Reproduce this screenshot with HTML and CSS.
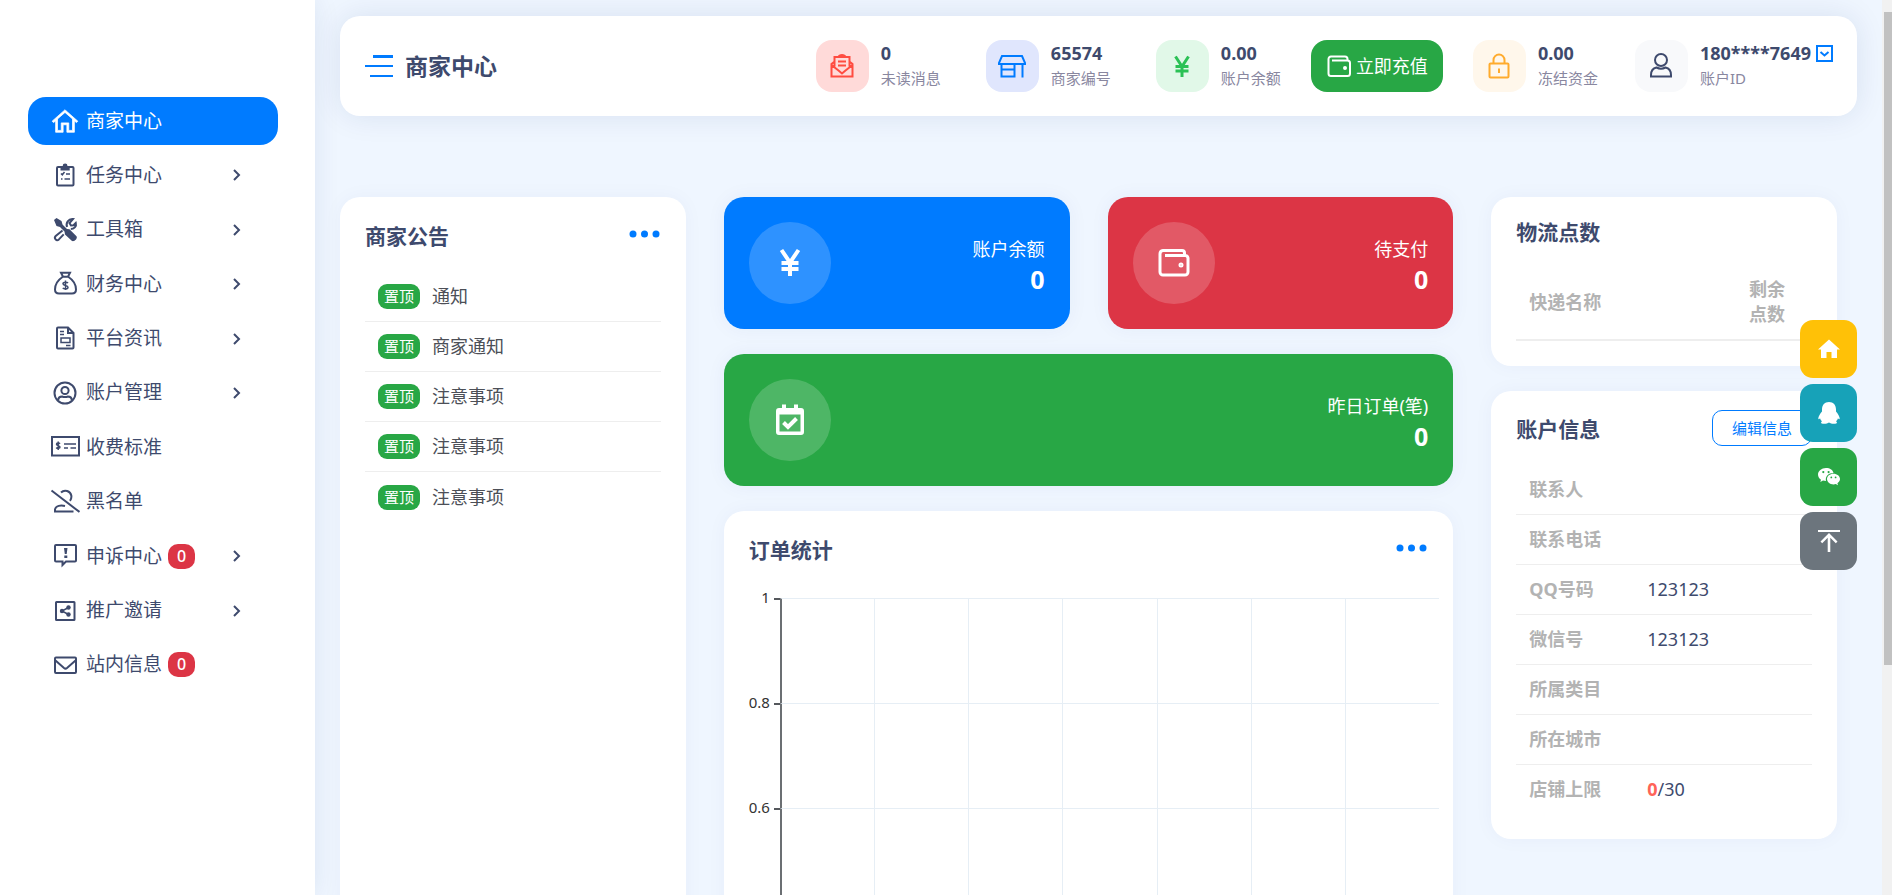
FILE: index.html
```html
<!DOCTYPE html>
<html lang="zh-CN">
<head>
<meta charset="utf-8">
<title>商家中心</title>
<link rel="stylesheet" href="styles.css">
</head>
<body>
<div class="app">
  <nav class="sidebar" aria-label="主导航">
    <ul class="menu">
      <li><a class="menu-link active" href="#">
        <svg class="menu-icon" viewBox="0 0 32 32"><path fill="currentColor" d="M16 4l-.719.687-13 11.500L3.720 17.720 6 15.900V28h8v-8h4v8h8V15.900l2.281 1.820 1.438-1.438-13-11.500zm0 2.844l8 7V26h-4v-8h-8v8H8V13.844z" stroke="currentColor" stroke-width=".8"/></svg>
        <span>商家中心</span></a></li>
      <li><a class="menu-link" href="#">
        <svg class="menu-icon line" viewBox="0 0 30 30"><rect x="7" y="7" width="16.5" height="18.5" rx="1"/><path class="solid" d="M10.5 6h2.200a2.400 2.400 0 0 1 4.800 0h2.200v4.500h-9.200z"/><path class="thin" d="M11 13.500l1.300 1.300 2.200-2.800M16 14h4M11 19h1.500M14.500 19H20"/></svg>
        <span>任务中心</span><svg class="chevron" viewBox="0 0 12 16"><path d="M3 3l5 5-5 5"/></svg></a></li>
      <li><a class="menu-link" href="#">
        <svg class="menu-icon line" viewBox="0 0 30 30"><path class="solid" d="M4 5L6.500 3l5 3 1 3.500 4.500 4.500 2.500.2 7 7c1.500 2-2 5.800-4.500 4.800L15 19.500l-.5-3-4.500-4.500-3.500-1z"/><path d="M17 12c-1.500-4 1.500-8.500 6-8l-3.500 4 1.500 2.500 2.500-.2 2.300-2.300c1 3.500-2 6-5 6M12.500 15.500L5.700 21c-2.200 2.400.8 5.600 3.200 3.400l4.800-5"/></svg>
        <span>工具箱</span><svg class="chevron" viewBox="0 0 12 16"><path d="M3 3l5 5-5 5"/></svg></a></li>
      <li><a class="menu-link" href="#">
        <svg class="menu-icon line" viewBox="0 0 30 30"><path d="M11 3.700h9l-2 4h-5zM12.500 8C8 11 5 16 5 20.500 5 23.500 7 24.500 9 24.500h13c2 0 4-1 4-4C26 16 23 11 18.500 8"/><path class="thin" d="M18 14c-.8-1-5-1.300-5 .8 0 2.200 5 1.200 5 3.500 0 2.200-4.300 2-5.200.6M15.500 11.500v9.500"/></svg>
        <span>财务中心</span><svg class="chevron" viewBox="0 0 12 16"><path d="M3 3l5 5-5 5"/></svg></a></li>
      <li><a class="menu-link" href="#">
        <svg class="menu-icon line" viewBox="0 0 30 30"><path d="M7 4.500A1 1 0 0 1 8 3.500h10l5.500 5.500v14.500a1 1 0 0 1-1 1H8a1 1 0 0 1-1-1zM18 3.500v5.500h5.500"/><path class="thin" d="M10 7.500h4M10 10.500h4M11 14h9v4.500h-9zM16 21.500h4.500"/></svg>
        <span>平台资讯</span><svg class="chevron" viewBox="0 0 12 16"><path d="M3 3l5 5-5 5"/></svg></a></li>
      <li><a class="menu-link" href="#">
        <svg class="menu-icon line" viewBox="0 0 30 30"><circle cx="15" cy="15" r="10.500"/><circle cx="15" cy="12.500" r="3.600"/><path d="M8 22c.5-3 2.500-3.500 4-3.500 2 .8 4 .8 6 0 1.500 0 3.500.5 4 3.500"/></svg>
        <span>账户管理</span><svg class="chevron" viewBox="0 0 12 16"><path d="M3 3l5 5-5 5"/></svg></a></li>
      <li><a class="menu-link" href="#">
        <svg class="menu-icon line" viewBox="0 0 30 30"><rect x="2" y="5" width="27" height="18.500"/><path class="thin" d="M10 11.800c-.8-1-3.500-1-3.500.5s3.500 1.200 3.500 2.800-3 1.600-3.700.4M8.200 9.500v8.500M14 12h12M14 16h4M20.500 16H26"/></svg>
        <span>收费标准</span></a></li>
      <li><a class="menu-link" href="#">
        <svg class="menu-icon line" viewBox="0 0 30 30"><path d="M1.500 3.500L29.500 25M11 5.500c3.500-3.500 9.500-1.500 10.300 3 .4 2.500-.3 4-1.300 5.300M15 19c-4-1-9.500-.5-10 3.500V24.500h18.500"/></svg>
        <span>黑名单</span></a></li>
      <li><a class="menu-link" href="#">
        <svg class="menu-icon line" viewBox="0 0 30 30"><path d="M6 4h19a1 1 0 0 1 1 1v14.500a1 1 0 0 1-1 1h-9L12.500 24v-3.500H6a1 1 0 0 1-1-1V5a1 1 0 0 1 1-1z"/><path class="solid" d="M14 7h3.500l-.8 6h-1.900zM14.300 14.500h3v2.500h-3z"/></svg>
        <span>申诉中心</span><span class="count">0</span><svg class="chevron" viewBox="0 0 12 16"><path d="M3 3l5 5-5 5"/></svg></a></li>
      <li><a class="menu-link" href="#">
        <svg class="menu-icon line" viewBox="0 0 30 30"><rect x="6" y="6" width="18.500" height="18" rx=".5"/><path class="thin" d="M18.500 11.500L12 15l6.500 3.500"/><circle class="solid" cx="18.500" cy="11.500" r="2.200"/><circle class="solid" cx="12" cy="15" r="2.200"/><circle class="solid" cx="18.500" cy="18.500" r="2.200"/></svg>
        <span>推广邀请</span><svg class="chevron" viewBox="0 0 12 16"><path d="M3 3l5 5-5 5"/></svg></a></li>
      <li><a class="menu-link" href="#">
        <svg class="menu-icon line" viewBox="0 0 30 30"><rect x="5" y="7.500" width="21" height="15.500" rx="1"/><path d="M5.500 10.500l8.500 7.500c1 .8 2 .8 3 0l8.500-7.500"/></svg>
        <span>站内信息</span><span class="count">0</span></a></li>
    </ul>
  </nav>

  <main class="main">
    <header class="topbar">
      <button class="toggle" type="button" aria-label="折叠菜单">
        <svg viewBox="0 0 28 22"><path fill="currentColor" d="M8 0h20v3H8zM0 10h28v2H0zM5 20h23v2H5z"/></svg>
      </button>
      <h1 class="page-title">商家中心</h1>
      <div class="stats">
        <div class="stat wide">
          <span class="stat-icon red"><svg viewBox="0 0 28 28"><path d="M6 10L3.500 12v12.500h21V12L22 10M3.500 13l7 5.500 3.500 3 3.500-3 7-5.500M6.500 14.500V5h15v9.500M10.500 5c1-2.800 6-2.800 7 0M10 9.500h8M10 13.500h8"/></svg></span>
          <span class="stat-text"><b>0</b><small>未读消息</small></span>
        </div>
        <div class="stat wide">
          <span class="stat-icon blue"><svg viewBox="0 0 28 28"><path d="M4 4h20l3.500 8H.5zM3.500 12v12.500h13V12M3.500 17.500h13M24.500 12v13.500"/></svg></span>
          <span class="stat-text"><b>65574</b><small>商家编号</small></span>
        </div>
        <div class="stat">
          <span class="stat-icon green"><svg class="heavy" viewBox="0 0 28 28"><path d="M7.500 4.500L14 14.500l6.500-10M7.500 14.500h13M7.500 19h13M14 14.500V25"/></svg></span>
          <span class="stat-text"><b>0.00</b><small>账户余额</small></span>
        </div>
        <button class="recharge" type="button">
          <svg viewBox="0 0 24 24"><path d="M20.500 6.500V5a2.500 2.500 0 0 0-2.500-2.500H4A2.500 2.500 0 0 0 1.500 5v14.500A2.500 2.500 0 0 0 4 22h16.500a2.500 2.500 0 0 0 2.500-2.500V9a2.500 2.500 0 0 0-2.500-2.500H5"/><circle cx="18" cy="14" r="1" /></svg>
          立即充值</button>
        <div class="stat near">
          <span class="stat-icon amber"><svg viewBox="0 0 28 28"><rect x="4.500" y="11.500" width="19" height="14" rx="1"/><path d="M8.500 11.500V8a5.500 5.500 0 0 1 11 0v3.500M14 16.500v4.500"/></svg></span>
          <span class="stat-text"><b>0.00</b><small>冻结资金</small></span>
        </div>
        <div class="stat">
          <span class="stat-icon pale"><svg viewBox="0 0 28 28"><circle cx="14" cy="8" r="6"/><path d="M9.500 15.500c3 1.600 6 1.600 9 0 3.500.8 5.500 3.500 5.500 7.500v1.500H4V23c0-4 2-6.700 5.500-7.500z"/></svg></span>
          <span class="stat-text"><b>180****7649 <svg class="caret" viewBox="0 0 17 17"><path d="M1 1h15v15H1zM4.500 7l4 3.500 4-3.500"/></svg></b><small>账户ID</small></span>
        </div>
      </div>
    </header>

    <div class="grid">
      <section class="card notices">
        <div class="card-head">
          <h2>商家公告</h2>
          <button class="more" type="button" aria-label="更多"><svg viewBox="0 0 32 8"><circle cx="4" cy="4" r="3.500"/><circle cx="15.500" cy="4" r="3.500"/><circle cx="27" cy="4" r="3.500"/></svg></button>
        </div>
        <ul class="notice-list">
          <li><span class="tag">置顶</span><a href="#">通知</a></li>
          <li><span class="tag">置顶</span><a href="#">商家通知</a></li>
          <li><span class="tag">置顶</span><a href="#">注意事项</a></li>
          <li><span class="tag">置顶</span><a href="#">注意事项</a></li>
          <li><span class="tag">置顶</span><a href="#">注意事项</a></li>
        </ul>
      </section>

      <div class="center">
        <section class="tile tile-blue">
          <span class="disc"><svg class="heavy" viewBox="0 0 32 32"><path d="M7.500 3L16 15.500 24.500 3M7.500 16h17M7.500 22h17M16 15v14"/></svg></span>
          <span class="tile-text"><span>账户余额</span><b>0</b></span>
        </section>
        <section class="tile tile-red">
          <span class="disc"><svg viewBox="0 0 32 32"><path d="M26.500 8V6A2.500 2.500 0 0 0 24 3.500H5A3.500 3.500 0 0 0 2 7v18a3 3 0 0 0 3 3h22a3 3 0 0 0 3-3V11a3 3 0 0 0-3-2.500H7"/><circle cx="23" cy="18" r="1"/></svg></span>
          <span class="tile-text"><span>待支付</span><b>0</b></span>
        </section>
        <section class="tile tile-green">
          <span class="disc"><svg class="heavy" viewBox="0 0 32 32"><path fill="currentColor" stroke="none" fill-rule="evenodd" d="M8 .5h4V4h8V.5h4V4h3q3 0 3 3v21q0 3-3 3H5q-3 0-3-3V7q0-3 3-3h3zM5.500 10.500v17h21v-17z"/><path d="M9.500 18.500l4.500 4.500 8.500-8.500"/></svg></span>
          <span class="tile-text"><span>昨日订单(笔)</span><b>0</b></span>
        </section>
        <section class="card chart-card">
          <div class="card-head">
            <h2>订单统计</h2>
            <button class="more" type="button" aria-label="更多"><svg viewBox="0 0 32 8"><circle cx="4" cy="4" r="3.500"/><circle cx="15.500" cy="4" r="3.500"/><circle cx="27" cy="4" r="3.500"/></svg></button>
          </div>
          <div class="chart">
            <div class="band"><span class="tick">1</span><i></i><i></i><i></i><i></i><i></i><i></i><i></i></div>
            <div class="band"><span class="tick">0.8</span><i></i><i></i><i></i><i></i><i></i><i></i><i></i></div>
            <div class="band"><span class="tick">0.6</span><i></i><i></i><i></i><i></i><i></i><i></i><i></i></div>
          </div>
        </section>
      </div>

      <div class="side">
        <section class="card">
          <h2>物流点数</h2>
          <table class="points">
            <thead><tr><th scope="col">快递名称</th><th class="remain" scope="col">剩余点数</th></tr></thead>
          </table>
        </section>
        <section class="card">
          <div class="card-head account-head">
            <h2>账户信息</h2>
            <button class="edit" type="button">编辑信息</button>
          </div>
          <table class="info">
            <tbody>
              <tr><th scope="row">联系人</th><td></td></tr>
              <tr><th scope="row">联系电话</th><td></td></tr>
              <tr><th scope="row">QQ号码</th><td>123123</td></tr>
              <tr><th scope="row">微信号</th><td>123123</td></tr>
              <tr><th scope="row">所属类目</th><td></td></tr>
              <tr><th scope="row">所在城市</th><td></td></tr>
              <tr><th scope="row">店铺上限</th><td><b>0</b>/30</td></tr>
            </tbody>
          </table>
        </section>
      </div>
    </div>
  </main>

  <div class="dock">
    <a class="dock-home" href="#" aria-label="首页"><svg viewBox="0 0 22 22"><path d="M11 1.500L0 11.500h3V20h5.500v-6h5v6H19v-8.500h3z"/></svg></a>
    <a class="dock-qq" href="#" aria-label="QQ"><svg viewBox="0 0 22 22"><path d="M11 0C6.500 0 4 3 4 7.500v2C2 12 .3 14.500.3 16.500c0 1 .8 1.200 1.700-.3.3 1.300 1 2.300 2 3.100-1.500.7-1.300 2.400 1 2.500 2.500.2 4.500-.2 6-1.300 1.500 1.100 3.500 1.500 6 1.300 2.300-.1 2.500-1.800 1-2.500 1-.8 1.700-1.800 2-3.100.9 1.500 1.700 1.300 1.700.3 0-2-1.700-4.500-3.700-7v-2C18 3 15.500 0 11 0z"/></svg></a>
    <a class="dock-wechat" href="#" aria-label="微信"><svg viewBox="0 0 22 22"><path fill-rule="evenodd" d="M8 2C3.500 2 0 5 0 8.500c0 2.200 1.200 4 3 5.200L2.300 16l2.700-1.400c1 .3 2 .4 3 .4-1-4.500 2.500-8 7.500-8C15 4 12 2 8 2zM5.300 5a1.100 1.100 0 1 1 0 2.200 1.100 1.100 0 0 1 0-2.200zm5.300 0a1.100 1.100 0 1 1 0 2.200 1.100 1.100 0 0 1 0-2.200zM15.500 7.800c-3.700 0-6.500 2.400-6.500 5.300s2.800 5.300 6.500 5.300c.8 0 1.600-.1 2.300-.4l2.200 1.200-.6-2C21 16.200 22 14.700 22 13.100c0-2.900-2.900-5.300-6.500-5.300zm-2.200 2.700a.9.9 0 1 1 0 1.800.9.900 0 0 1 0-1.800zm4.300 0a.9.900 0 1 1 0 1.800.9.900 0 0 1 0-1.800z"/></svg></a>
    <a class="dock-top" href="#" aria-label="回到顶部"><svg viewBox="0 0 22 22"><path d="M0 0h22v2H0zM11 3l8.500 8.500-1.700 1.700L12.300 7.700V22H9.700V7.700L4.200 13.200l-1.700-1.700z"/></svg></a>
  </div>

  <div class="scroll-rail" aria-hidden="true"><div class="scroll-thumb"></div></div>
</div>
</body>
</html>
```

FILE: styles.css
```css
* { box-sizing: border-box; }

body {
  margin: 0;
  background: #eff6ff;
  color: #3e4a6d;
  font-family: "Noto Sans", "Noto Sans CJK SC", sans-serif;
  font-size: 18px;
  font-weight: 400;
  line-height: 25px;
}

h1, h2, ul { margin: 0; padding: 0; }
ul { list-style: none; }
a { color: inherit; text-decoration: none; }
button { font: inherit; cursor: pointer; }
svg { display: block; flex: none; }

.app {
  display: flex;
  height: 100vh;
  overflow: hidden;
}

/* sidebar */
.sidebar {
  flex: none;
  width: 315px;
  padding: 97px 37px 0 28px;
  background: #fff;
  box-shadow: 0 0 25px rgba(8, 40, 110, .09);
}

.menu {
  display: flex;
  flex-direction: column;
  justify-content: space-between;
  height: 592px;
}

.menu-link {
  display: flex;
  align-items: center;
  height: 48px;
  padding: 0 35px 0 22px;
  border-radius: 18px;
  font-size: 19px;
}

.menu-link.active { background: #007bff; color: #fff; }
.menu-icon { width: 30px; height: 30px; margin-right: 6px; }

.line, .stat-icon svg, .recharge svg, .disc svg, .chevron, .caret {
  fill: none;
  stroke: currentColor;
  stroke-width: 2;
}

.line .solid { fill: currentColor; stroke: none; }
.line .thin { stroke-width: 1.5; }
.chevron { width: 12px; height: 16px; margin-left: auto; }

.count {
  margin-left: 6px;
  padding: 0 9px;
  border-radius: 10px;
  background: #dc3545;
  color: #fff;
  font-size: 16px;
  font-weight: 500;
}

/* header */
.main { flex: 1; min-width: 0; padding: 16px 25px 0; }

.topbar {
  display: flex;
  align-items: center;
  height: 100px;
  padding: 0 24px 0 25px;
  border-radius: 20px;
  background: #fff;
  box-shadow: 0 0 30px rgba(8, 40, 110, .1);
}

.toggle { padding: 0; border: 0; background: none; color: #007bff; }
.toggle svg { width: 28px; height: 22px; }
.page-title { margin-left: 12px; font-size: 23px; font-weight: 700; }

.stats { display: flex; gap: 30px; margin-left: auto; }
.stat { display: flex; gap: 12px; }
.wide { margin-right: 15px; }
.near { margin-right: 7px; }

.stat-icon {
  display: grid;
  place-items: center;
  width: 53px;
  height: 52px;
  border-radius: 16px;
}

.stat-icon svg { width: 28px; height: 28px; }
.stat-icon .heavy { stroke-width: 3; }
.red { background: #ffdad9; color: #ff4c41; }
.blue { background: #e0e6fd; color: #007bff; }
.green { background: #e1f8e8; color: #2bc155; }
.amber { background: #fff7eb; color: #ffab2d; }
.pale { background: #f8f9fb; }

.stat-text { display: flex; flex-direction: column; padding-top: 1px; }
.stat-text b { display: flex; align-items: center; gap: 5px; font-size: 18px; font-weight: 700; white-space: nowrap; }
.stat-text small { color: #89879f; font-size: 15px; line-height: 24px; }
.caret { width: 17px; height: 17px; color: #007bff; }

.recharge {
  display: flex;
  align-items: center;
  gap: 5px;
  height: 52px;
  padding: 0 15px 0 16px;
  border: 0;
  border-radius: 16px;
  background: #28a745;
  color: #fff;
}

.recharge svg { width: 24px; height: 24px; }

/* dashboard */
.grid {
  display: grid;
  grid-template-columns: repeat(4, 1fr);
  gap: 38px;
  padding: 81px 20px 0 0;
}

.main { margin-right: 10px; }

.card {
  padding: 25px;
  border-radius: 20px;
  background: #fff;
  box-shadow: 0 0 20px rgba(8, 60, 130, .04);
}

.card h2 { font-size: 21px; font-weight: 700; line-height: 20px; }
.card-head { display: flex; justify-content: space-between; align-items: flex-start; }
.notices { min-height: 900px; }
.card-head h2 { padding-top: 4px; }
.more { padding: 8px 0; border: 0; background: none; color: #007bff; }
.more svg { width: 32px; height: 8px; fill: currentColor; }

.notice-list { padding-top: 26px; color: #4c4f57; }
.notice-list li { display: flex; align-items: center; gap: 12px; height: 50px; padding-left: 13px; border-bottom: 1px solid #eee; }
.notice-list li:last-child { border-bottom: 0; }

.tag {
  padding: 0 6px;
  border-radius: 9px;
  background: #28a745;
  color: #fff;
  font-size: 15px;
  font-weight: 400;
}

.center {
  display: grid;
  grid-column: span 2;
  grid-template-columns: 1fr 1fr;
  grid-template-rows: auto auto 1fr;
  gap: 25px 38px;
}

.tile {
  display: flex;
  align-items: center;
  justify-content: space-between;
  padding: 25px;
  border-radius: 20px;
  color: #fff;
  box-shadow: 0 0 20px rgba(8, 60, 130, .05);
}

.tile-blue { background: #007bff; }
.tile-red { background: #dc3545; }
.tile-green { grid-column: span 2; background: #28a745; }
.disc { display: grid; place-items: center; width: 82px; height: 82px; border-radius: 50%; background: rgba(255, 255, 255, .18); }
.disc svg { width: 32px; height: 32px; }
.disc svg { stroke-width: 3; }
.disc .heavy { stroke-width: 4; }
.tile-text { display: flex; flex-direction: column; align-items: flex-end; gap: 2px; padding-top: 4px; }
.tile-text b { font-size: 25px; font-weight: 700; line-height: 30px; }

.chart-card { grid-column: span 2; }

.chart { margin: 38px -11px 0 0; font-size: 15px; color: #333; }
.band { display: grid; grid-template-columns: 31px repeat(7, 1fr); height: 105px; }
.band i { border-top: 1px solid #e6eef5; border-left: 1px solid #e6eef5; }
.band i:nth-child(2) { border-left: 2px solid #6b6f73; }

.tick {
  display: flex;
  justify-content: flex-end;
  gap: 4px;
  height: 25px;
  margin-top: -12px;
  line-height: 22px;
}

.tick::after { content: ""; width: 6px; height: 2px; margin-top: 12px; background: #55585c; }

.side { display: grid; align-content: start; gap: 25px; }

table { width: 100%; border-collapse: collapse; text-align: left; }
th, td { padding: 12px 13px; }
th { color: #b3b3b3; font-weight: 700; }
.points { margin-top: 23px; }
.points th { border-bottom: 2px solid #eee; }
.points .remain { width: 76px; }
.points th:first-child { width: 220px; }
.account-head h2 { padding-top: 3px; }

.edit {
  height: 36px;
  margin: -6px 0 0;
  padding: 0 19px;
  border: 1px solid #007bff;
  border-radius: 10px;
  background: #fff;
  color: #007bff;
  font-size: 15px;
}

.info { margin-top: 19px; }
.info th { width: 118px; }
.info tr { border-bottom: 1px solid #eee; }
.info tr:last-child { border-bottom: 0; }
.info td b { color: #ff6358; font-weight: 700; }

/* floating shortcuts lie over the right column */
.dock {
  position: fixed;
  top: 320px;
  right: 35px;
  display: grid;
  gap: 6px;
}

.dock a { display: grid; place-items: center; width: 57px; height: 58px; border-radius: 13px; color: #fff; }
.dock svg { width: 22px; height: 22px; fill: currentColor; }
.dock-home { background: #ffc107; }
.dock-qq { background: #17a2b8; }
.dock-wechat { background: #28a745; }
.dock-top { background: #6c757d; }

/* scroll rail along the window edge */
.scroll-rail { position: fixed; top: 0; right: 0; bottom: 0; width: 10px; padding: 12px 0 0 2px; background: #f1f1f1; }
.scroll-thumb { height: 74%; background: #c1c1c1; }
```
